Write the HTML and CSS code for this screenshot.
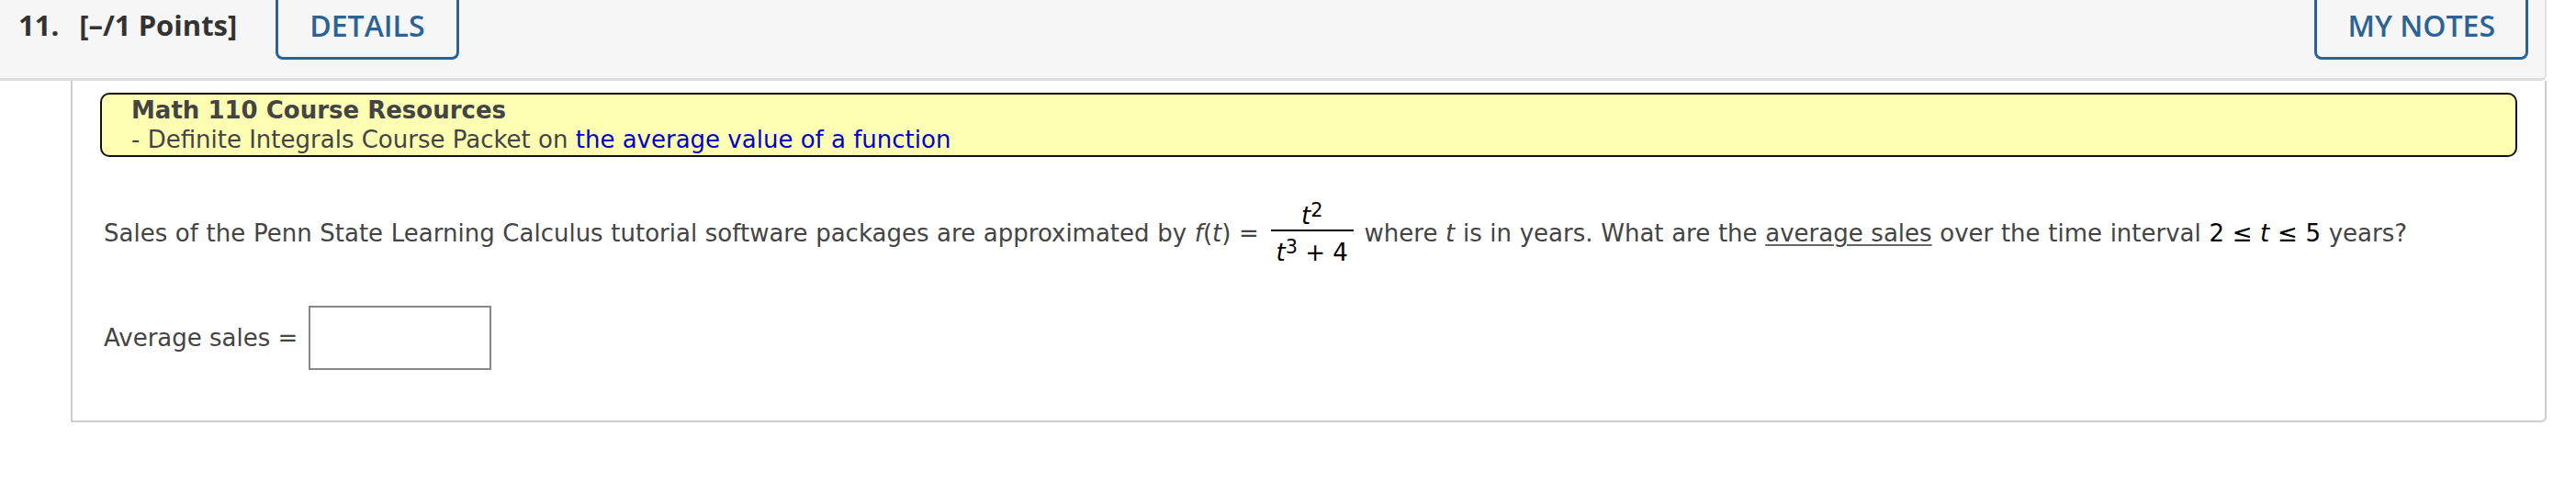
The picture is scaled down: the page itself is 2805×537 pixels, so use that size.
FILE: index.html
```html
<!DOCTYPE html>
<html lang="en">
<head>
<meta charset="utf-8">
<title>Question 11</title>
<link rel="stylesheet" href="styles.css">
</head>
<body>
<div class="question">
  <div class="q-header">
    <div class="q-title"><span class="q-num">11.</span><span class="q-points">[–/1 Points]</span></div>
    <button class="btn btn-details">DETAILS</button>
    <button class="btn btn-notes">MY NOTES</button>
  </div>
  <div class="q-body">
    <div class="resources">
      <div class="res-title">Math 110 Course Resources</div>
      <div class="res-line">- Definite Integrals Course Packet on <a class="res-link" href="#">the average value of a function</a></div>
    </div>
    <p class="prompt">Sales of the Penn State Learning Calculus tutorial software packages are approximated by <i>f</i>(<i>t</i>) = <span class="frac"><span class="num"><i>t</i><sup>2</sup></span><span class="den"><i>t</i><sup>3</sup> + 4</span></span> where <i>t</i> is in years. What are the <u class="term">average sales</u> over the time interval <span class="math">2 ≤ <i>t</i> ≤ 5</span> years?</p>
    <div class="answer"><span class="ans-label">Average sales =</span><input class="ans-box" type="text"></div>
  </div>
</div>
</body>
</html>
```

FILE: styles.css
```css
html, body {
  margin: 0;
  padding: 0;
  background: #ffffff;
}

body {
  font-family: "DejaVu Sans", Verdana, sans-serif;
  color: #444444;
}

.question {
  width: 2773px;
}

.q-header {
  display: flex;
  align-items: flex-start;
  height: 85px;
  background: #f6f6f6;
  border-bottom: 3px solid #dddddd;
  border-right: 2px solid #e2e2e2;
  border-bottom-right-radius: 6px;
}

.q-title {
  display: flex;
  gap: 22px;
  padding: 6px 0 0 20px;
  font-family: "Open Sans", sans-serif;
  font-weight: 700;
  font-size: 31px;
  color: #333333;
}

.btn {
  box-sizing: border-box;
  height: 75px;
  margin-top: -10px;
  padding: 0 34px;
  background: transparent;
  border: 3px solid #2c6396;
  border-radius: 8px;
  font-family: "Open Sans", sans-serif;
  font-weight: 600;
  font-size: 32px;
  color: #2c6396;
}

.btn-details {
  margin-left: 42px;
}

.btn-notes {
  margin-left: auto;
  margin-right: 18px;
  padding: 0 33px;
}

.q-body {
  margin-left: 77px;
  border: 2px solid #cccccc;
  border-top: none;
  border-bottom-right-radius: 6px;
  padding: 13px 30px 55px 30px;
}

.resources {
  background: #ffffb3;
  border: 2px solid #111111;
  border-radius: 10px;
  padding: 1px 32px;
  font-size: 26px;
  line-height: 32px;
  color: #444444;
}

.res-title {
  font-weight: 700;
}

.res-link {
  color: #0000cc;
  text-decoration: none;
}

.prompt {
  margin: 49px 0 0 0;
  padding-left: 4px;
  font-size: 26px;
  line-height: 32px;
  word-spacing: 0.4px;
}

.prompt i {
  font-style: italic;
}

.frac {
  display: inline-flex;
  flex-direction: column;
  align-items: center;
  vertical-align: middle;
  color: #000000;
  margin: 0 3px 0 4px;
  word-spacing: 0;
}

.frac .num,
.frac .den {
  padding: 0 6px;
  line-height: 30px;
}

.frac .den {
  border-top: 2px solid #000000;
  padding-top: 8px;
}

sup {
  font-size: 0.8em;
  line-height: 0;
  vertical-align: 0.4em;
}

.math {
  color: #000000;
}

.term {
  text-decoration: underline;
  text-decoration-color: #666666;
  text-underline-offset: 3px;
}

.answer {
  display: flex;
  align-items: center;
  gap: 12px;
  margin-top: 43px;
  padding-left: 4px;
  font-size: 26px;
}

.ans-box {
  box-sizing: border-box;
  width: 199px;
  height: 70px;
  border: 2px solid #888888;
  border-radius: 0;
  margin: 0;
  padding: 0;
  background: #ffffff;
}
```
